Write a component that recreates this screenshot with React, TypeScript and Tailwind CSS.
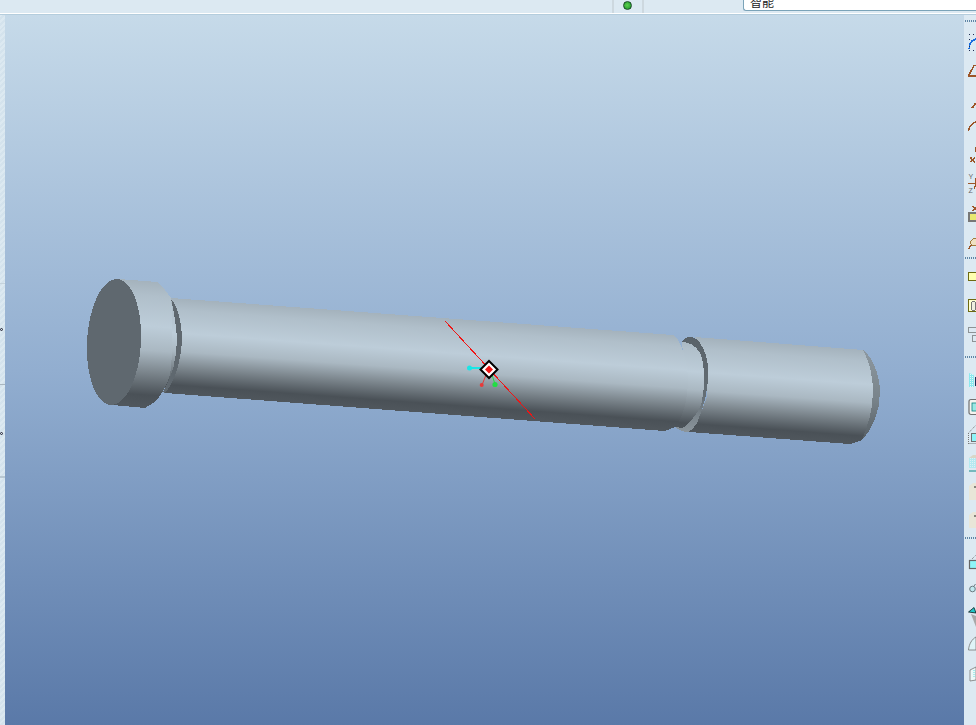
// CAD viewport: shaded shaft model on a blue gradient, with clipped toolbars round it.
function Separator() {
  return <div className="h-[2px] shrink-0 ml-px bg-[repeating-linear-gradient(90deg,#5f86a6_0_1px,transparent_1px_2px)]" />;
}

function ShadeStops() {
  return (
    <>
      <stop offset="0" stopColor="#a4b2bc" />
      <stop offset="0.12" stopColor="#b0bfca" />
      <stop offset="0.36" stopColor="#bdcdd9" />
      <stop offset="0.55" stopColor="#aab8c2" />
      <stop offset="0.72" stopColor="#7c868d" />
      <stop offset="0.9" stopColor="#4a5157" />
      <stop offset="1" stopColor="#50575d" />
    </>
  );
}

function Model() {
  return (
    <svg width="959" height="710" viewBox="5 15 959 710" className="block">
      <defs>
        <linearGradient id="shaft" gradientUnits="userSpaceOnUse" x1="420" y1="316" x2="413" y2="412">
          <ShadeStops />
        </linearGradient>
        <linearGradient id="flange" gradientUnits="userSpaceOnUse" x1="144" y1="280" x2="136" y2="407">
          <ShadeStops />
        </linearGradient>
        <linearGradient id="tail" gradientUnits="userSpaceOnUse" x1="778" y1="343" x2="771" y2="439">
          <ShadeStops />
        </linearGradient>
        <linearGradient id="ring" x1="0" y1="0" x2="0" y2="1">
          <stop offset="0" stopColor="#596269" />
          <stop offset="0.6" stopColor="#636d74" />
          <stop offset="1" stopColor="#8b959c" />
        </linearGradient>
        <linearGradient id="rim" x1="0" y1="0" x2="0" y2="1">
          <stop offset="0" stopColor="#8d98a0" />
          <stop offset="0.55" stopColor="#78838a" />
          <stop offset="1" stopColor="#565e64" />
        </linearGradient>
      </defs>
      <g shapeRendering="crispEdges">
        {/* main shaft */}
        <path d="M171 298 L673 335 C680 338 688 360 688 380 C688 400 682 420 675 427 L665 431 L165 393 Z" fill="url(#shaft)" />
        {/* shoulder behind flange */}
        <path d="M171 299 C178 306 182 325 182 340 C181 360 175 382 165 393 L163 392 C172 378 177 358 177 338 C176 322 173 308 171 299 Z" fill="#5f686f" />
        {/* flange */}
        <path d="M118 279 L157 282 L165 290 L171 298 C173 315 173 355 170 375 C166 388 160 396 155 402 L145 408 L112 405 Z" fill="url(#flange)" />
        <ellipse cx="114" cy="342" rx="27" ry="63" transform="rotate(3 114 342)" fill="#5f686f" />
        {/* neck under the groove ring */}
        <path d="M682 342 L700 343 L707 380 L697 423 L688 432 L675 427 C682 420 688 400 688 380 C688 360 680 345 682 342 Z" fill="url(#tail)" />
        {/* tail section */}
        <path d="M695 337 L863 350 C872 356 880 375 880 392 C880 412 872 430 862 440 L850 444 L689 432 L697 423 L707 397 L708 370 L700 343 Z" fill="url(#tail)" />
        <path d="M682 342 C684 338 687 337 690 337 C694 337 698 340 700 343 C705 350 708 360 708 370 C709 385 705 405 697 423 C694 428 691 431 688 432 C683 432 679 430 675 427 L682 428 C687 426 690 422 693 418 C699 410 702 405 702 400 C704 392 704 385 704 377 C704 368 703 360 700 353 C696 346 690 342 682 342 Z" fill="url(#ring)" />
        <path d="M863 350 C872 356 880 375 880 392 C880 412 872 430 862 440 C867 428 873 410 873 392 C873 378 870 362 863 350 Z" fill="url(#rim)" />
      </g>
      {/* datum gizmo */}
      <g shapeRendering="crispEdges">
        <line x1="445" y1="321" x2="535" y2="419" stroke="#f01414" strokeWidth="1" />
        <line x1="470" y1="368" x2="484" y2="368" stroke="#19e6e6" strokeWidth="1.5" />
      </g>
      <circle cx="469.5" cy="368" r="2.5" fill="#19e6e6" />
      <line x1="482" y1="385" x2="486" y2="375" stroke="#e83a3a" strokeWidth="1" />
      <circle cx="481.7" cy="385" r="2" fill="#e83a3a" />
      <line x1="495" y1="384" x2="492" y2="375" stroke="#22dd44" strokeWidth="1" />
      <circle cx="495" cy="384.5" r="2.6" fill="#22dd44" />
      <path d="M489 361 L497.5 369.5 L489 378 L480.5 369.5 Z" fill="#fff" stroke="#000" strokeWidth="2" />
      <path d="M489 365.5 L493 369.5 L489 373.5 L485 369.5 Z" fill="#f01414" />
    </svg>
  );
}

function ToolStripA() {
  return (
    <svg width="12" height="235" viewBox="0 22 12 235" className="block shrink-0" shapeRendering="crispEdges">
      <path d="M5 49 L6 44 L8 41 L12 39" fill="none" stroke="#1a6fe0" strokeWidth="1.4" />
      <path d="M5 34.5 h1 M9 34.5 h1 M5 39.5 h1 M5 50.5 h1 M9 50.5 h1 M5 46 h1" stroke="#1c2a50" strokeWidth="1" />
      <path d="M4 76 H12 M4.5 76 L10 65.5 H12" fill="none" stroke="#9c5528" strokeWidth="1.6" />
      <path d="M8 108 L12 103" stroke="#9c5528" strokeWidth="1.8" />
      <path d="M4.5 131 C5 127 8 123 12 122" fill="none" stroke="#9c5528" strokeWidth="1.5" />
      <path d="M6.5 157.5 L11 162.5 M11 157.5 L6.5 162.5 M11.5 147 V152" stroke="#9c5528" strokeWidth="1.5" />
      <text x="4.5" y="179" fontSize="7" fill="#666" fontFamily="Liberation Sans, sans-serif">Y</text>
      <text x="4.5" y="193" fontSize="7" fill="#666" fontFamily="Liberation Sans, sans-serif">Z</text>
      <path d="M4 183.5 H12 M11 178 C12 180 12 186 10 189" fill="none" stroke="#9c5528" strokeWidth="1.2" />
      <path d="M9 206 L13 211 M13 206 L9 211" stroke="#9c5528" strokeWidth="1.5" />
      <rect x="5" y="213" width="9" height="8" fill="#e8e870" stroke="#777" strokeWidth="1.4" />
      <path d="M4.5 249 L12 239" stroke="#9c5528" strokeWidth="1.4" />
      <path d="M6 243 C7 240 10 238 12 238 V245 C10 246 8 246 6 243 Z" fill="#efe0c2" stroke="#a07a3c" strokeWidth="1" />
    </svg>
  );
}

function ToolStripB() {
  return (
    <svg width="12" height="97" viewBox="0 259 12 97" className="block shrink-0" shapeRendering="crispEdges">
      <rect x="4.5" y="272.5" width="9" height="8" fill="#ffffb0" stroke="#6e6a10" strokeWidth="1.2" />
      <rect x="4.5" y="299.5" width="9" height="12" fill="#ffffd0" stroke="#6e6a10" strokeWidth="1.2" />
      <ellipse cx="9.5" cy="306" rx="2.5" ry="4.5" fill="#f0f0e0" stroke="#777" />
      <rect x="4.5" y="327.5" width="9" height="5" fill="none" stroke="#8d9396" />
      <rect x="8.5" y="335.5" width="6" height="6" fill="none" stroke="#8d9396" />
    </svg>
  );
}

function ToolStripC() {
  return (
    <svg width="12" height="179" viewBox="0 358 12 179" className="block shrink-0">
      <defs>
        <pattern id="hatch" width="2" height="2" patternUnits="userSpaceOnUse">
          <rect width="2" height="2" fill="#8ce8ee" />
          <rect width="1" height="1" fill="#dff8f8" />
        </pattern>
      </defs>
      <path d="M5 373 L10 375 V387 H5 Z" fill="url(#hatch)" />
      <path d="M11.5 377 V386" stroke="#16325a" strokeWidth="1" />
      <rect x="5" y="399.5" width="9" height="15" rx="2" fill="#f4f4f0" stroke="#707070" strokeWidth="1.2" />
      <rect x="8" y="403" width="6" height="8" fill="#9ce8e4" stroke="#108080" strokeWidth="0.8" />
      <path d="M4.5 444 V433 L12 425 M4.5 443.5 H12" fill="none" stroke="#777" strokeDasharray="1 1" />
      <rect x="7.5" y="433.5" width="7" height="8" fill="#8ef4f8" stroke="#707070" />
      <path d="M5 458 L9 455 H12 V458 Z" fill="#d8d6c8" />
      <rect x="5" y="458" width="7" height="10" fill="url(#hatch)" opacity="0.5" />
      <path d="M5 471 H12" stroke="#108888" strokeWidth="1" />
      <path d="M5 486 L9 483 H12 V500 H5 Z" fill="#e8e6d8" />
      <path d="M10 487 h2" stroke="#222" strokeWidth="1" />
      <path d="M5 515 L9 512 H12 V528 H5 Z" fill="#e8e6d8" />
      <path d="M10 516 h2" stroke="#222" strokeWidth="1" />
    </svg>
  );
}

function ToolStripD() {
  return (
    <svg width="12" height="186" viewBox="0 539 12 186" className="block shrink-0">
      <path d="M8 559 L12 555" stroke="#777" strokeDasharray="1 1" />
      <rect x="5.5" y="560.5" width="8" height="8" fill="#8ef4f8" stroke="#666" strokeWidth="1.2" />
      <circle cx="8.5" cy="589" r="2.8" fill="#bfe8ee" stroke="#6a7a80" />
      <path d="M10 586 L11.5 584" stroke="#6a7a80" />
      <path d="M7 614 L12 627 V616 Z" fill="#a8a8a8" />
      <path d="M4.5 612 L10 607.5 L12 613 Z" fill="#20c8c8" stroke="#000" strokeWidth="0.7" />
      <path d="M4.5 650 C5 644 8 639 12 637 V650 Z" fill="#dff4f8" stroke="#777" strokeWidth="0.8" />
      <path d="M6 670 L12 667 V680 L6 681 Z" fill="#eef8f8" stroke="#777" strokeWidth="0.8" />
      <path d="M10 670 V678" stroke="#5ce0e0" strokeDasharray="1 1" />
    </svg>
  );
}

export default function App() {
  return (
    <div className="flex h-[725px] w-[976px] flex-col overflow-hidden bg-[#dce9f2]">
      <header className="flex h-[15px] shrink-0 border-b border-[#b4cddd]">
        <div className="flex h-[14px] w-full border-b border-white">
          <div className="w-[612px]" />
          <div className="flex w-[32px] justify-center border-x-2 border-[#cdd8df] pr-[2px] pt-[1px]">
            <span className="h-[9px] w-[9px] rounded-full border border-[#1c4a26] bg-[radial-gradient(circle_at_45%_45%,#5ed04e,#149028)]" />
          </div>
          <div className="w-[99px]" />
          <div className="flex h-[11px] w-[233px] items-end overflow-hidden rounded-bl-[3px] border-b border-l border-[#7ba3b8] bg-white pb-[2px] pl-[6px]">
            <span className="text-[12px] leading-[12px] text-[#222] [font-family:'Noto_Sans_CJK_SC',sans-serif]">智能</span>
          </div>
        </div>
      </header>
      <div className="flex min-h-0 flex-1">
        <aside className="flex w-[5px] shrink-0 flex-col items-start bg-[repeating-linear-gradient(135deg,#dce9f1_0_2px,#d4e3ed_2px_4px)]">
          <div className="mt-[268px] h-px w-full bg-[#c5d3dc]" />
          <div className="mt-[44px] h-[3px] w-[3px] rounded-full border border-[#223]" />
          <div className="mt-[53px] h-px w-full bg-[#a9b6bf]" />
          <div className="mt-[47px] h-[3px] w-[3px] rounded-full border border-[#223]" />
          <div className="mt-[41px] h-[2px] w-full bg-[#b9c8d2]" />
        </aside>
        <main className="flex-1 bg-gradient-to-b from-[#c6dae9] via-[#92aed0] to-[#5a79a8]">
          <Model />
        </main>
        <aside className="flex w-[12px] shrink-0 flex-col overflow-hidden bg-[#dce9f2] pt-[5px]">
          <Separator />
          <ToolStripA />
          <Separator />
          <ToolStripB />
          <Separator />
          <ToolStripC />
          <Separator />
          <ToolStripD />
        </aside>
      </div>
    </div>
  );
}
